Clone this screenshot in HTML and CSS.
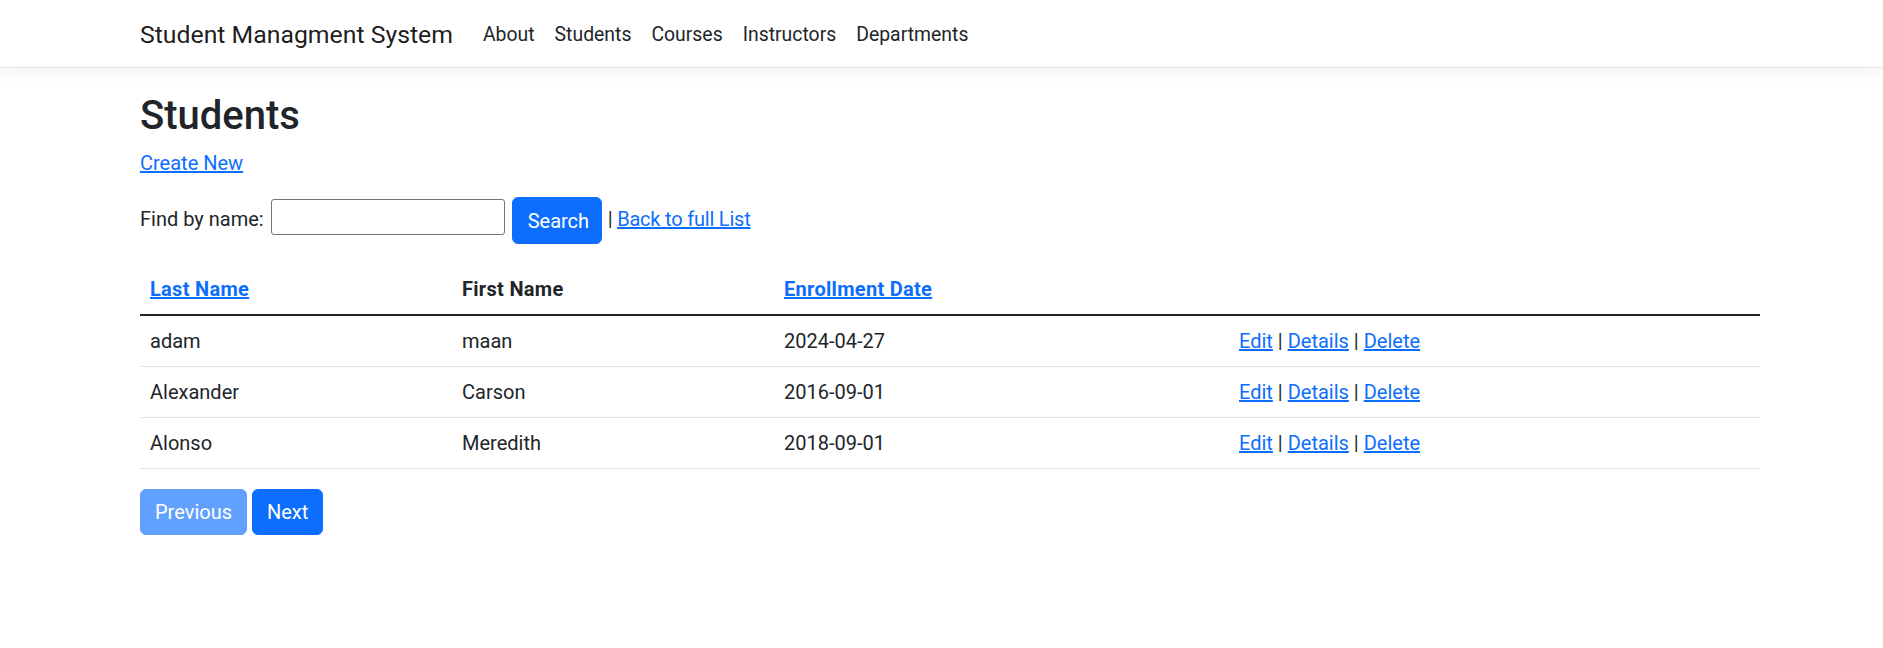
FILE: index.html
```html
<!DOCTYPE html>
<html lang="en">
<head>
<meta charset="utf-8">
<title>Students - Student Managment System</title>
<link rel="stylesheet" href="styles.css">
</head>
<body>
<header>
  <nav class="navbar">
    <div class="container nav-inner">
      <a class="brand" href="#">Student Managment System</a>
      <ul class="nav-list">
        <li><a class="nav-link" href="#">About</a></li>
        <li><a class="nav-link" href="#">Students</a></li>
        <li><a class="nav-link" href="#">Courses</a></li>
        <li><a class="nav-link" href="#">Instructors</a></li>
        <li><a class="nav-link" href="#">Departments</a></li>
      </ul>
    </div>
  </nav>
</header>
<main class="container main">
  <h1 class="title">Students</h1>
  <p class="create"><a href="#">Create New</a></p>
  <form class="search-form">
    <span class="label">Find by name:</span>
    <input class="search-input" type="text" name="SearchString">
    <button class="btn btn-primary search-btn" type="submit">Search</button>
    <span class="back">| <a href="#">Back to full List</a></span>
  </form>
  <table class="table">
    <colgroup>
      <col class="c1"><col class="c2"><col class="c3"><col class="c4">
    </colgroup>
    <thead>
      <tr>
        <th><a href="#">Last Name</a></th>
        <th>First Name</th>
        <th><a href="#">Enrollment Date</a></th>
        <th></th>
      </tr>
    </thead>
    <tbody>
      <tr>
        <td>adam</td><td>maan</td><td>2024-04-27</td>
        <td><a href="#">Edit</a> | <a href="#">Details</a> | <a href="#">Delete</a></td>
      </tr>
      <tr>
        <td>Alexander</td><td>Carson</td><td>2016-09-01</td>
        <td><a href="#">Edit</a> | <a href="#">Details</a> | <a href="#">Delete</a></td>
      </tr>
      <tr>
        <td>Alonso</td><td>Meredith</td><td>2018-09-01</td>
        <td><a href="#">Edit</a> | <a href="#">Details</a> | <a href="#">Delete</a></td>
      </tr>
    </tbody>
  </table>
  <div class="pager">
    <a class="btn btn-primary disabled" href="#">Previous</a>
    <a class="btn btn-primary" href="#">Next</a>
  </div>
</main>
</body>
</html>
```
FILE: styles.css
```css
* { box-sizing: border-box; }
html, body { margin: 0; padding: 0; background: #fff; }
body {
  font-family: Roboto, "Liberation Sans", sans-serif;
  font-size: 20px;
  line-height: 30px;
  color: #212529;
}
a { color: #0d6efd; text-decoration: underline; }

.container {
  width: 1620px;
  margin-left: 140px;
}

/* navbar */
.navbar {
  height: 68px;
  background: #fff;
  border-bottom: 1px solid #e3e4ea;
  box-shadow: 0 5px 15px rgba(0, 0, 0, 0.05);
  padding: 9.5px 0 7.5px;
}
.nav-inner {
  display: flex;
  align-items: center;
}
.brand {
  font-size: 24.8px;
  line-height: 37.5px;
  padding: 6.25px 0;
  margin-right: 20px;
  color: rgba(0, 0, 0, 0.9);
  text-decoration: none;
  white-space: nowrap;
}
.nav-list {
  display: flex;
  list-style: none;
  margin: 0;
  padding: 0;
}
.nav-link {
  display: block;
  padding: 10px 10px;
  font-size: 19.4px;
  color: #212529;
  text-decoration: none;
}

/* main */
.main { padding-top: 24px; padding-bottom: 20px; }
.title {
  font-size: 40px;
  line-height: 48px;
  font-weight: 500;
  margin: 0 0 8px;
}
.create { margin: 0 0 19px; }

.search-form {
  display: flex;
  align-items: flex-start;
  margin: 0 0 20px;
  height: 47px;
}
.label { margin-top: 7px; }
.search-input {
  width: 234px;
  height: 36px;
  margin: 2px 0 0 7px;
  border: 1px solid #767676;
  border-radius: 3px;
  padding: 1px 2px;
  font-family: inherit;
  font-size: 16px;
  background: #fff;
}
.search-btn { margin-left: 7px; width: 90px; padding: 7.5px 0; }
.back { margin: 7px 0 0 6px; white-space: pre; letter-spacing: -0.2px; }

.btn {
  display: inline-block;
  font-family: inherit;
  font-size: 20px;
  line-height: 30px;
  font-weight: 400;
  text-align: center;
  text-decoration: none;
  padding: 7.5px 15px;
  border: 1px solid transparent;
  border-radius: 6px;
  cursor: pointer;
}
.btn-primary {
  color: #fff;
  background: #0d6efd;
  border-color: #0d6efd;
}
.btn.disabled { opacity: 0.65; pointer-events: none; }

/* table */
.table {
  width: 1620px;
  table-layout: fixed;
  border-collapse: collapse;
  margin-bottom: 20px;
}
.c1 { width: 312px; }
.c2 { width: 322px; }
.c3 { width: 455px; }
.c4 { width: 531px; }
.table th, .table td {
  padding: 10px;
  text-align: left;
  vertical-align: top;
  border-bottom: 1px solid #dee2e6;
}
.table th {
  font-weight: 700;
  letter-spacing: 0.3px;
  border-bottom: 2px solid #212529;
}
.pager { display: flex; gap: 5px; }
.pager .btn { height: 46px; padding: 7px 14px; }
```
